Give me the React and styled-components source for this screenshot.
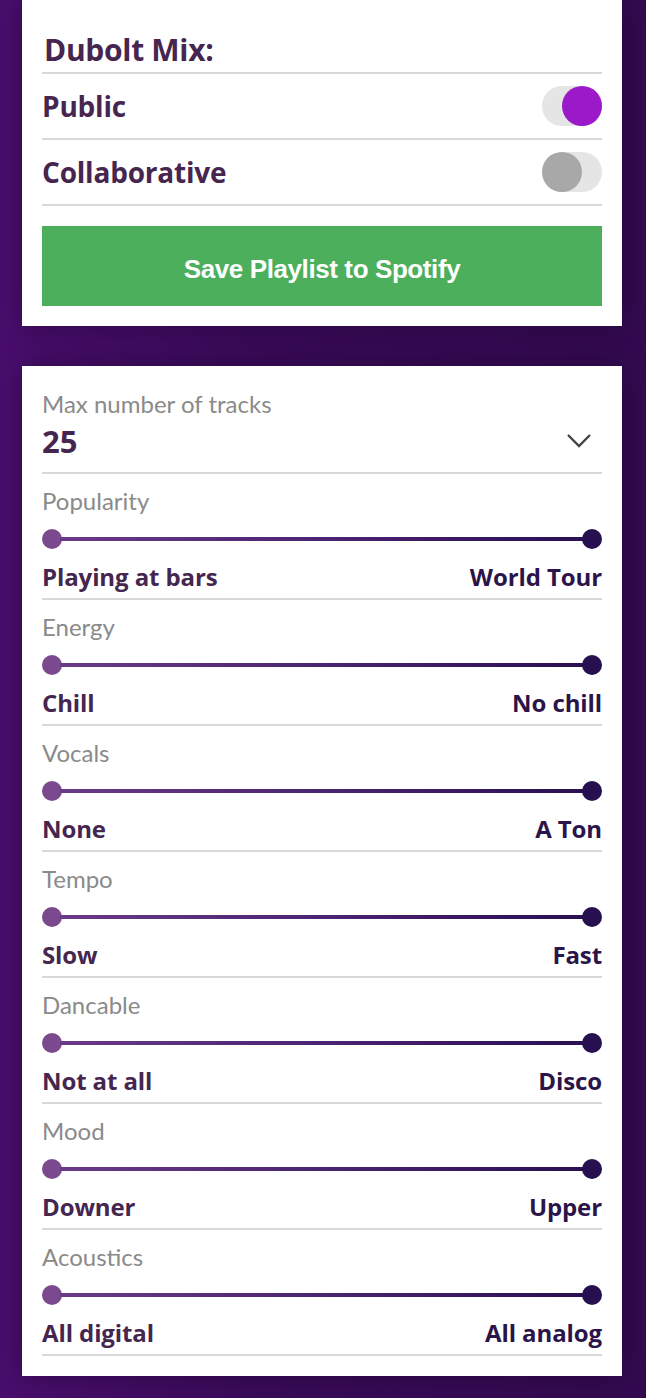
import React from 'react';
import styled, { createGlobalStyle } from 'styled-components';

const GlobalStyle = createGlobalStyle`
  html, body {
    margin: 0;
    padding: 0;
  }
  body {
    min-height: 1398px;
    background: linear-gradient(to right, #4a0e6e 0%, #3a0b5a 40%, #330a50 100%);
    font-family: "Open Sans", "Noto Sans", sans-serif;
  }
`;

const Page = styled.div`
  padding: 0 24px 22px 22px;
  display: flex;
  flex-direction: column;
  gap: 40px;
`;

const Card = styled.div`
  background: #fff;
  box-shadow: 0 0 28px rgba(20, 0, 30, 0.45);
  padding: ${p => p.$pad};
  display: flex;
  flex-direction: column;
`;

const Heading = styled.h2`
  margin: 0;
  padding-left: 2px;
  font-size: 30px;
  line-height: 44px;
  font-weight: 700;
  letter-spacing: -0.3px;
  color: #46264f;
  border-bottom: 2px solid #d8d8d8;
`;

const ToggleRow = styled.div`
  height: 64px;
  display: flex;
  align-items: center;
  justify-content: space-between;
  border-bottom: 2px solid #d8d8d8;
`;

const RowLabel = styled.span`
  font-size: 28px;
  font-weight: 700;
  letter-spacing: -0.2px;
  color: #46264f;
`;

const Switch = styled.div`
  width: 60px;
  height: 40px;
  border-radius: 20px;
  background: #e5e5e5;
  display: flex;
  justify-content: ${p => (p.$on ? 'flex-end' : 'flex-start')};
`;

const Knob = styled.div`
  width: 40px;
  height: 40px;
  border-radius: 50%;
  background: ${p => (p.$on ? '#9b19c9' : '#a8a8a8')};
`;

const SaveButton = styled.button`
  margin-top: 20px;
  height: 80px;
  padding-top: 8px;
  border: none;
  background: #4caf5b;
  color: #fff;
  font-family: "Liberation Sans", Arial, sans-serif;
  font-weight: 700;
  font-size: 26px;
  letter-spacing: -0.4px;
  cursor: pointer;
`;

const Section = styled.div`
  padding: ${p => p.$pad};
  border-bottom: 2px solid #d8d8d8;
  display: flex;
  flex-direction: column;
`;

const FieldLabel = styled.div`
  font-family: "Lato", "Open Sans", sans-serif;
  font-size: 24px;
  line-height: 28px;
  color: #8a8a8a;
`;

const SelectRow = styled.div`
  margin-top: 3px;
  height: 40px;
  display: flex;
  align-items: center;
  justify-content: space-between;
`;

const SelectValue = styled.span`
  font-size: 31px;
  font-weight: 700;
  color: #46264f;
`;

const Chevron = styled.svg`
  width: 26px;
  height: 16px;
  margin-right: 10px;
`;

const Slider = styled.div`
  margin-top: 14px;
  height: 20px;
  display: flex;
  align-items: center;
`;

const Thumb = styled.div`
  width: 20px;
  height: 20px;
  border-radius: 50%;
  flex-shrink: 0;
  background: ${p => p.$color};
`;

const Track = styled.div`
  flex: 1;
  height: 4px;
  margin: 0 -2px;
  background: linear-gradient(to right, #6a3a86, #4a2472 50%, #2a0f52);
`;

const Ends = styled.div`
  margin-top: 12px;
  height: 30px;
  display: flex;
  align-items: center;
  justify-content: space-between;
`;

const EndLabel = styled.span`
  font-size: 24px;
  font-weight: 700;
  letter-spacing: -0.1px;
  color: ${p => (p.$right ? '#2b1449' : '#45264f')};
`;

const sliders = [
  { name: 'Popularity', low: 'Playing at bars', high: 'World Tour' },
  { name: 'Energy', low: 'Chill', high: 'No chill' },
  { name: 'Vocals', low: 'None', high: 'A Ton' },
  { name: 'Tempo', low: 'Slow', high: 'Fast' },
  { name: 'Dancable', low: 'Not at all', high: 'Disco' },
  { name: 'Mood', low: 'Downer', high: 'Upper' },
  { name: 'Acoustics', low: 'All digital', high: 'All analog' },
];

function Toggle({ label, on }) {
  return (
    <ToggleRow>
      <RowLabel>{label}</RowLabel>
      <Switch $on={on}>
        <Knob $on={on} />
      </Switch>
    </ToggleRow>
  );
}

export default function App() {
  return (
    <>
      <GlobalStyle />
      <Page>
        <Card $pad="28px 20px 20px 20px">
          <Heading>Dubolt Mix:</Heading>
          <Toggle label="Public" on />
          <Toggle label="Collaborative" />
          <SaveButton>Save Playlist to Spotify</SaveButton>
        </Card>

        <Card $pad="24px 20px 20px 20px">
          <Section $pad="0 0 11px 0">
            <FieldLabel>Max number of tracks</FieldLabel>
            <SelectRow>
              <SelectValue>25</SelectValue>
              <Chevron viewBox="0 0 26 16">
                <polyline points="2,2 13,13 24,2" fill="none" stroke="#444" strokeWidth="2.4" />
              </Chevron>
            </SelectRow>
          </Section>
          {sliders.map(s => (
            <Section key={s.name} $pad="13px 0 7px 0">
              <FieldLabel>{s.name}</FieldLabel>
              <Slider>
                <Thumb $color="#7b4a8e" />
                <Track />
                <Thumb $color="#261050" />
              </Slider>
              <Ends>
                <EndLabel>{s.low}</EndLabel>
                <EndLabel $right>{s.high}</EndLabel>
              </Ends>
            </Section>
          ))}
        </Card>
      </Page>
    </>
  );
}
